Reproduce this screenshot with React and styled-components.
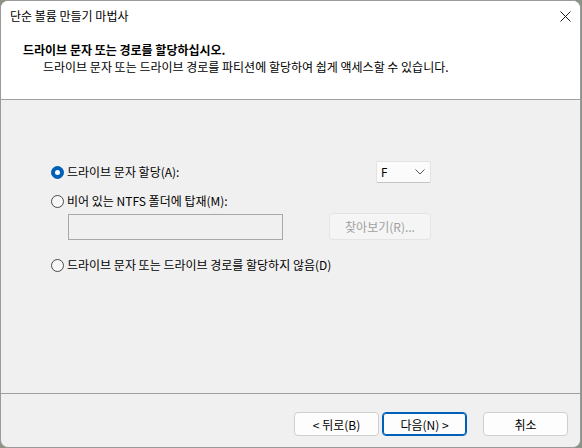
import React from "react";
import styled, { createGlobalStyle } from "styled-components";

const Global = createGlobalStyle`
  html, body { margin: 0; padding: 0; background: #8a9484; }
  body { width: 582px; height: 448px; overflow: hidden; }
  * { box-sizing: border-box; }
`;

const Window = styled.div`
  width: 581px;
  height: 448px;
  border: 1px solid #9a9a9a;
  border-radius: 8px;
  overflow: hidden;
  display: flex;
  flex-direction: column;
  background: #f0f0f0;
  font-family: "Noto Sans CJK KR", "Noto Sans", sans-serif;
  font-size: 12px;
  color: #000;
`;

const TitleBar = styled.div`
  height: 30px;
  background: #fff;
  display: flex;
  align-items: center;
  justify-content: space-between;
  padding: 0 9px 0 9px;
`;

const Title = styled.span`
  font-size: 12px;
  line-height: 16px;
`;

const Header = styled.div`
  height: 69px;
  background: #fff;
  border-bottom: 1px solid #a0a0a0;
  padding: 10px 0 0 22px;
  display: flex;
  flex-direction: column;
`;

const HeadTitle = styled.div`
  font-weight: 700;
  line-height: 18px;
`;

const HeadSub = styled.div`
  line-height: 15px;
  padding-left: 20px;
`;

const Body = styled.div`
  flex: 1;
  padding: 61px 0 0 50px;
  display: flex;
  flex-direction: column;
`;

const Content = styled.div`
  width: 380px;
  display: flex;
  flex-direction: column;
`;

const Row = styled.div`
  display: flex;
  align-items: center;
  justify-content: space-between;
  height: ${(p) => p.$h || 16}px;
  margin-top: ${(p) => p.$mt || 0}px;
`;

const RadioLabel = styled.label`
  display: flex;
  align-items: center;
  gap: 3px;
  line-height: 16px;
`;

const Radio = styled.span`
  width: 13px;
  height: 13px;
  border-radius: 50%;
  display: inline-flex;
  align-items: center;
  justify-content: center;
  background: ${(p) => (p.$on ? "#005fb8" : "#f7f7f7")};
  border: 1px solid ${(p) => (p.$on ? "#005fb8" : "#4a4a4a")};
  &::after {
    content: "";
    width: 5px;
    height: 5px;
    border-radius: 50%;
    background: #fff;
    display: ${(p) => (p.$on ? "block" : "none")};
  }
`;

const Select = styled.div`
  width: 55px;
  height: 22px;
  background: #fbfbfb;
  border: 1px solid #e3e3e3;
  border-bottom-color: #c4c4c4;
  border-radius: 2px;
  display: flex;
  align-items: center;
  justify-content: space-between;
  padding: 0 5px 0 4px;
  font-family: "Noto Sans", sans-serif;
`;

const FolderRow = styled.div`
  display: flex;
  align-items: center;
  justify-content: space-between;
  margin-top: 4px;
  padding-left: 17px;
  height: 27px;
`;

const TextBox = styled.div`
  width: 215px;
  height: 26px;
  background: #f0f0f0;
  border: 1px solid #a8a8a8;
`;

const Button = styled.button`
  width: ${(p) => p.$w || 85}px;
  height: ${(p) => p.$hh || 24}px;
  font-family: "Noto Sans CJK KR", "Noto Sans", sans-serif;
  font-size: 12px;
  border-radius: 4px;
  padding: 0;
  background: ${(p) => (p.$disabled ? "#f5f5f5" : "#fdfdfd")};
  color: ${(p) => (p.$disabled ? "#a0a0a0" : "#000")};
  border: 1px solid ${(p) => (p.$primary ? "#005fb8" : p.$disabled ? "#e4e4e4" : "#cfcfcf")};
  box-shadow: ${(p) => (p.$primary ? "inset 0 0 0 1px #005fb8" : "none")};
`;

const Footer = styled.div`
  height: 54px;
  border-top: 1px solid #a0a0a0;
  display: flex;
  justify-content: flex-end;
  align-items: flex-start;
  padding: 18px 12px 0 0;
`;

const Gap = styled.span`
  width: ${(p) => p.$w}px;
`;

const CloseIcon = () => (
  <svg width="11" height="11" viewBox="0 0 11 11">
    <path d="M0.5 0.5 L10.5 10.5 M10.5 0.5 L0.5 10.5" stroke="#1a1a1a" strokeWidth="1" fill="none" />
  </svg>
);

const Chevron = () => (
  <svg width="10" height="6" viewBox="0 0 10 6">
    <path d="M0.5 0.5 L5 5 L9.5 0.5" stroke="#555" strokeWidth="1" fill="none" />
  </svg>
);

export default function App() {
  return (
    <>
      <Global />
      <Window>
        <TitleBar>
          <Title>단순 볼륨 만들기 마법사</Title>
          <CloseIcon />
        </TitleBar>
        <Header>
          <HeadTitle>드라이브 문자 또는 경로를 할당하십시오.</HeadTitle>
          <HeadSub>드라이브 문자 또는 드라이브 경로를 파티션에 할당하여 쉽게 액세스할 수 있습니다.</HeadSub>
        </Header>
        <Body>
          <Content>
            <Row $h={22}>
              <RadioLabel>
                <Radio $on />
                드라이브 문자 할당(A):
              </RadioLabel>
              <Select>
                <span>F</span>
                <Chevron />
              </Select>
            </Row>
            <Row $mt={10}>
              <RadioLabel>
                <Radio />
                비어 있는 NTFS 폴더에 탑재(M):
              </RadioLabel>
            </Row>
            <FolderRow>
              <TextBox />
              <Button $w={102} $hh={27} $disabled>찾아보기(R)...</Button>
            </FolderRow>
            <Row $mt={17}>
              <RadioLabel>
                <Radio />
                드라이브 문자 또는 드라이브 경로를 할당하지 않음(D)
              </RadioLabel>
            </Row>
          </Content>
        </Body>
        <Footer>
          <Button>&lt; 뒤로(B)</Button>
          <Gap $w={3} />
          <Button $primary>다음(N) &gt;</Button>
          <Gap $w={16} />
          <Button>취소</Button>
        </Footer>
      </Window>
    </>
  );
}
